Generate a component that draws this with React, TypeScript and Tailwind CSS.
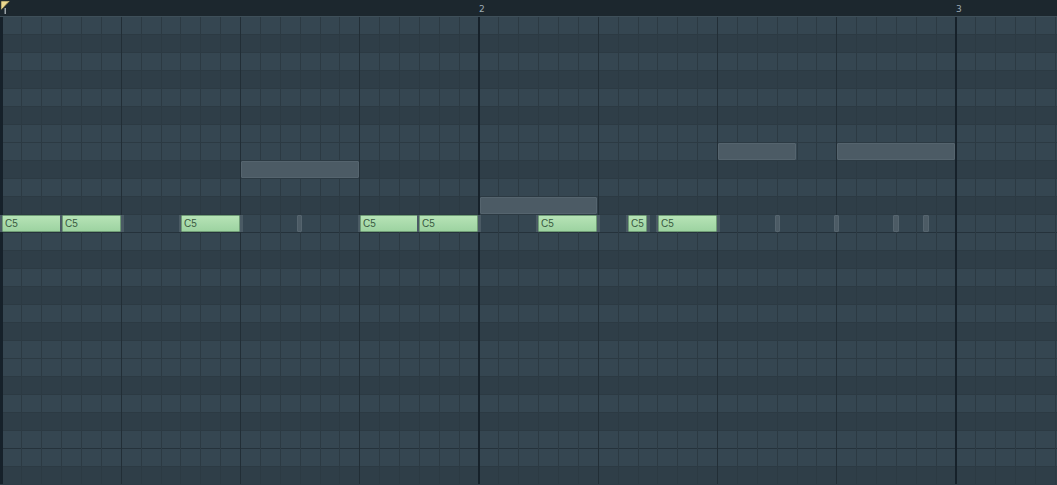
import React from "react";

const ROW_H = 18;
const ROWS = 26;
const COLS = 53;
// row 0 is B5, row 11 is C5
const BLACK = [1, 3, 5, 8, 10];

type Note = { row: number; start: number; end: number };

const greenNotes: Note[] = [
  { row: 11, start: 2, end: 61 },
  { row: 11, start: 62, end: 121 },
  { row: 11, start: 181, end: 240 },
  { row: 11, start: 360, end: 419 },
  { row: 11, start: 419, end: 478 },
  { row: 11, start: 538, end: 597 },
  { row: 11, start: 628, end: 647 },
  { row: 11, start: 658, end: 717 },
];

const ghostNotes: Note[] = [
  { row: 8, start: 241, end: 359 },
  { row: 10, start: 480, end: 597 },
  { row: 7, start: 718, end: 796 },
  { row: 7, start: 837, end: 955 },
  { row: 11, start: 297, end: 302 },
  { row: 11, start: 775, end: 780 },
  { row: 11, start: 834, end: 839 },
  { row: 11, start: 893, end: 899 },
  { row: 11, start: 923, end: 929 },
];

function Marker() {
  return (
    <svg width="12" height="16" viewBox="0 0 12 16" className="shrink-0">
      <polygon points="1,1 10,1 1,10" fill="#ecd98f" stroke="#3a3a2a" strokeWidth="0.6" />
      <line x1="8" y1="2.5" x2="3" y2="8" stroke="#6b6340" strokeWidth="1" />
      <rect x="4.5" y="8" width="1.5" height="6" fill="#9aa3a8" />
    </svg>
  );
}

function Ruler() {
  return (
    <div className="flex h-[17px] items-start border-b border-[#3e4f59] bg-[#1c272e] text-[9px] leading-[10px] text-[#9eabb3]">
      <Marker />
      <span className="ml-[467px] mt-[4px] w-[477px]">2</span>
      <span className="mt-[4px]">3</span>
    </div>
  );
}

function Rows() {
  return (
    <div className="flex flex-col">
      {Array.from({ length: ROWS }, (_, i) => {
        const black = BLACK.includes(i % 12);
        const octave = i % 12 === 11;
        return (
          <div
            key={i}
            className={`h-[18px] shrink-0 border-b ${octave ? "border-[#25323b]" : "border-[#2c3a43]"} ${
              black ? "bg-[#2f3e48]" : "bg-[#354651]"
            }`}
          />
        );
      })}
    </div>
  );
}

function Columns() {
  return (
    <div className="pointer-events-none absolute inset-0 flex">
      <div className="h-full w-[2.5px] shrink-0 bg-[#16212a]" />
      {Array.from({ length: COLS }, (_, i) => {
        const n = i + 1;
        const cls =
          n % 24 === 0
            ? "border-r-2 border-[#16212a]"
            : n % 6 === 0
              ? "border-r border-[#222e36]"
              : "border-r border-[#2c3a43]";
        return <div key={i} className={`h-full w-[19.875px] shrink-0 ${cls}`} />;
      })}
    </div>
  );
}

function NoteBlock({ n, ghost }: { n: Note; ghost?: boolean }) {
  const pos = { left: n.start, width: n.end - n.start, top: n.row * ROW_H, height: ROW_H - 1 };
  if (ghost) {
    return <div className="absolute rounded-[1px] border border-[#55646e] bg-[#4c5b65]" style={pos} />;
  }
  return (
    <>
      <div
        className="absolute bg-[#4a5a64]"
        style={{ ...pos, left: n.start - 2, width: n.end - n.start + 5 }}
      />
      <div
        className="absolute flex items-center overflow-hidden rounded-[1px] border border-[#6f9c76] bg-gradient-to-b from-[#b6e3b6] to-[#9dd3a1] pl-[2px] font-['Liberation_Sans',sans-serif] text-[10px] leading-none text-[#3a5a41]"
        style={pos}
      >
        C5
      </div>
    </>
  );
}

export default function App() {
  return (
    <div className="h-[485px] w-[1057px] overflow-hidden bg-[#2e3d47] font-['DejaVu_Sans',sans-serif]">
      <Ruler />
      <div className="relative h-[467px] overflow-hidden">
        <Rows />
        <Columns />
        {ghostNotes.map((n, i) => (
          <NoteBlock key={`g${i}`} n={n} ghost />
        ))}
        {greenNotes.map((n, i) => (
          <NoteBlock key={`n${i}`} n={n} />
        ))}
      </div>
    </div>
  );
}
